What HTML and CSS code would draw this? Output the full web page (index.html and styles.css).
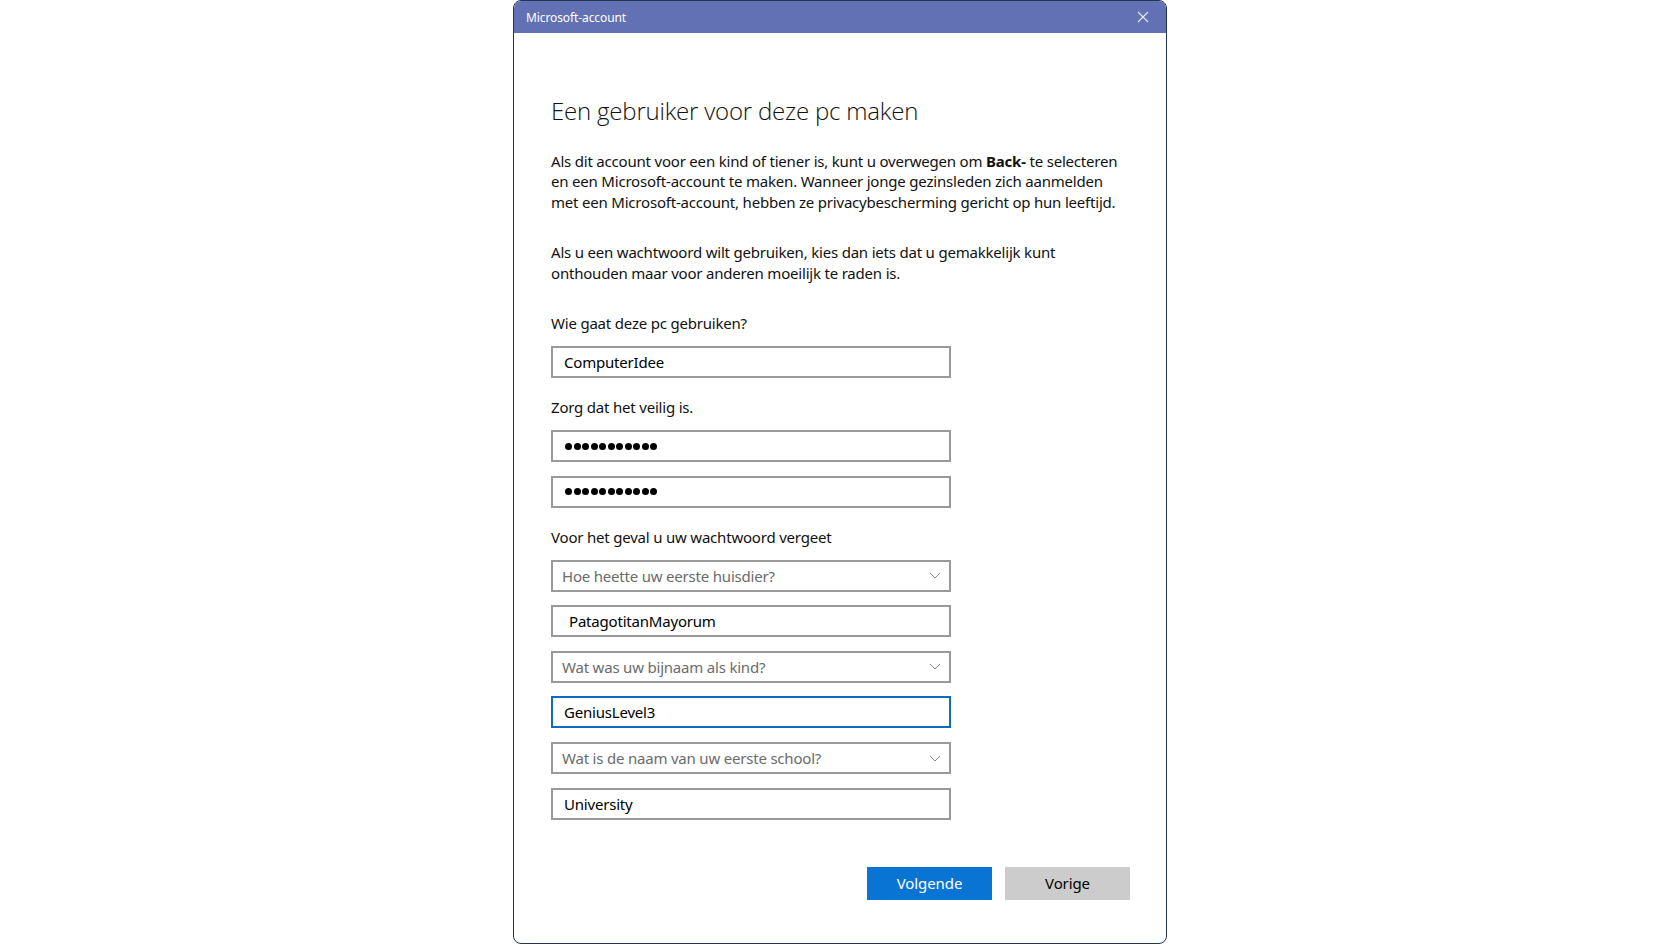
FILE: index.html
```html
<!DOCTYPE html>
<html lang="nl">
<head>
<meta charset="utf-8">
<title>Microsoft-account</title>
<link rel="stylesheet" href="styles.css">
</head>
<body>
<div class="dialog">
  <div class="titlebar">
    <span class="title">Microsoft-account</span>
    <svg class="close" width="12" height="12" viewBox="0 0 12 12"><path d="M1 1L11 11M11 1L1 11" stroke="#e8ebf5" stroke-width="1.1" fill="none"/></svg>
  </div>
  <div class="content">
    <h1 class="heading">Een gebruiker voor deze pc maken</h1>
    <p class="para">Als dit account voor een kind of tiener is, kunt u overwegen om <b>Back-</b> te selecteren<br>en een Microsoft-account te maken. Wanneer jonge gezinsleden zich aanmelden<br>met een Microsoft-account, hebben ze privacybescherming gericht op hun leeftijd.</p>
    <p class="para para2">Als u een wachtwoord wilt gebruiken, kies dan iets dat u gemakkelijk kunt<br>onthouden maar voor anderen moeilijk te raden is.</p>
    <div class="label label-first">Wie gaat deze pc gebruiken?</div>
    <div class="field">ComputerIdee</div>
    <div class="label">Zorg dat het veilig is.</div>
    <div class="field dots" aria-label="wachtwoord"><i></i><i></i><i></i><i></i><i></i><i></i><i></i><i></i><i></i><i></i><i></i></div>
    <div class="field dots" aria-label="wachtwoord bevestigen"><i></i><i></i><i></i><i></i><i></i><i></i><i></i><i></i><i></i><i></i><i></i></div>
    <div class="label">Voor het geval u uw wachtwoord vergeet</div>
    <div class="field select"><span>Hoe heette uw eerste huisdier?</span><svg class="chev" width="12" height="7" viewBox="0 0 12 7"><path d="M1 1L6 6L11 1" stroke="#8a8a8a" stroke-width="1" fill="none"/></svg></div>
    <div class="field indent">PatagotitanMayorum</div>
    <div class="field select"><span>Wat was uw bijnaam als kind?</span><svg class="chev" width="12" height="7" viewBox="0 0 12 7"><path d="M1 1L6 6L11 1" stroke="#8a8a8a" stroke-width="1" fill="none"/></svg></div>
    <div class="field focus">GeniusLevel3</div>
    <div class="field select"><span>Wat is de naam van uw eerste school?</span><svg class="chev" width="12" height="7" viewBox="0 0 12 7"><path d="M1 1L6 6L11 1" stroke="#8a8a8a" stroke-width="1" fill="none"/></svg></div>
    <div class="field">University</div>
    <div class="buttons">
      <button class="btn primary">Volgende</button>
      <button class="btn secondary">Vorige</button>
    </div>
  </div>
</div>
</body>
</html>
```
FILE: styles.css
```css
html, body {
  margin: 0;
  padding: 0;
  background: #ffffff;
}
body {
  font-family: "Noto Sans", "Open Sans", sans-serif;
  color: #000;
  height: 944px;
  overflow: hidden;
}
.dialog {
  box-sizing: border-box;
  width: 654px;
  height: 944px;
  margin: 0 auto;
  border: 1px solid #233455;
  border-radius: 8px;
  overflow: hidden;
  background: #fff;
  display: flex;
  flex-direction: column;
}
.titlebar {
  height: 32px;
  background: #6271b4;
  display: flex;
  align-items: center;
  justify-content: space-between;
  padding: 0 17px 0 12px;
  flex-shrink: 0;
}
.title {
  color: #ffffff;
  font-size: 12px;
  letter-spacing: -0.1px;
}
.close {
  display: block;
}
.content {
  padding: 0 36px 0 37px;
  display: flex;
  flex-direction: column;
}
.heading {
  font-family: "Open Sans", "Noto Sans", sans-serif;
  font-weight: 300;
  font-size: 24px;
  line-height: 32px;
  margin: 62px 0 0 0;
  color: #111;
  letter-spacing: -0.2px;
}
.para {
  margin: 24px 0 0 0;
  font-size: 15px;
  line-height: 20.4px;
  white-space: nowrap;
  letter-spacing: -0.2px;
  color: #111;
}
.para b {
  font-weight: 700;
}
.para2 {
  margin-top: 30px;
}
.label {
  font-size: 15px;
  line-height: 20px;
  margin-top: 19px;
  margin-bottom: 13px;
  letter-spacing: -0.2px;
  color: #111;
}
.label-first {
  margin-top: 30px;
}
.field {
  box-sizing: border-box;
  width: 400px;
  height: 32px;
  border: 2px solid #999999;
  padding: 0 11px;
  display: flex;
  align-items: center;
  font-size: 15px;
  letter-spacing: -0.2px;
  color: #000;
  flex-shrink: 0;
}
.field + .field {
  margin-top: 13.6px;
}
.dots {
  gap: 1.5px;
  padding-left: 12px;
}
.dots i {
  display: block;
  width: 7px;
  height: 7px;
  border-radius: 50%;
  background: #000;
}
.indent {
  padding-left: 16px;
}
.select {
  justify-content: space-between;
  color: #6b6b6b;
  padding-left: 9px;
  padding-right: 8px;
}
.chev {
  display: block;
}
.focus {
  border-color: #0f6cbd;
}
.buttons {
  display: flex;
  justify-content: flex-end;
  gap: 13px;
  margin-top: 47px;
}
.btn {
  width: 125px;
  height: 33px;
  border: none;
  font-family: "Noto Sans", "Open Sans", sans-serif;
  font-size: 15px;
  padding: 0;
  letter-spacing: -0.1px;
}
.primary {
  background: #0a74d5;
  color: #fff;
}
.secondary {
  background: #cccccc;
  color: #000;
}
```
